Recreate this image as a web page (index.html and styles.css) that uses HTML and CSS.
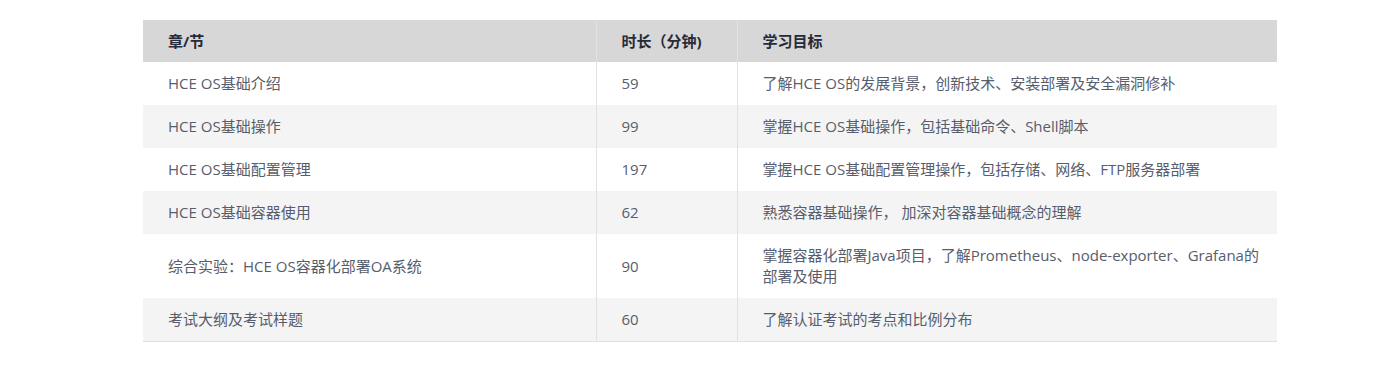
FILE: index.html
```html
<!DOCTYPE html>
<html lang="zh-CN">
<head>
<meta charset="utf-8">
<title>课程大纲</title>
<link rel="stylesheet" href="styles.css">
</head>
<body>
<div class="wrap">
<table class="outline">
  <colgroup>
    <col class="c1"><col class="c2"><col class="c3">
  </colgroup>
  <thead>
    <tr><th>章/节</th><th>时长（分钟)</th><th>学习目标</th></tr>
  </thead>
  <tbody>
    <tr><td>HCE OS基础介绍</td><td>59</td><td>了解HCE OS的发展背景，创新技术、安装部署及安全漏洞修补</td></tr>
    <tr><td>HCE OS基础操作</td><td>99</td><td>掌握HCE OS基础操作，包括基础命令、Shell脚本</td></tr>
    <tr><td>HCE OS基础配置管理</td><td>197</td><td>掌握HCE OS基础配置管理操作，包括存储、网络、FTP服务器部署</td></tr>
    <tr><td>HCE OS基础容器使用</td><td>62</td><td>熟悉容器基础操作， 加深对容器基础概念的理解</td></tr>
    <tr><td>综合实验：HCE OS容器化部署OA系统</td><td>90</td><td>掌握容器化部署Java项目，了解Prometheus、node-exporter、Grafana的部署及使用</td></tr>
    <tr><td>考试大纲及考试样题</td><td>60</td><td>了解认证考试的考点和比例分布</td></tr>
  </tbody>
</table>
</div>
</body>
</html>
```

FILE: styles.css
```css
html, body {
  margin: 0;
  padding: 0;
  background: #ffffff;
}
.wrap {
  padding: 20px 108px 0 143px;
}
.outline {
  width: 1134px;
  border-collapse: collapse;
  table-layout: fixed;
  font-family: "Open Sans", "Noto Sans CJK SC", sans-serif;
  font-size: 15px;
  line-height: 21px;
  color: #575d6c;
}
.c1 { width: 453px; }
.c2 { width: 141px; }
.c3 { width: 540px; }
.outline th {
  background: #d7d7d7;
  color: #252b3a;
  font-weight: 700;
  text-align: left;
  padding: 11px 25px 10px 25px;
  border-left: 1px solid #e2e2e6;
}
.outline td {
  padding: 11px 25px 11px 25px;
  border-left: 1px solid #dfe1e6;
  vertical-align: middle;
}
.outline td:last-child {
  padding-right: 12px;
}
.outline th:first-child,
.outline td:first-child {
  border-left: none;
}
.outline tbody tr:nth-child(even) td {
  background: #f4f4f4;
}
.outline tbody tr:last-child td {
  border-bottom: 1px solid #dfe1e6;
}
```
